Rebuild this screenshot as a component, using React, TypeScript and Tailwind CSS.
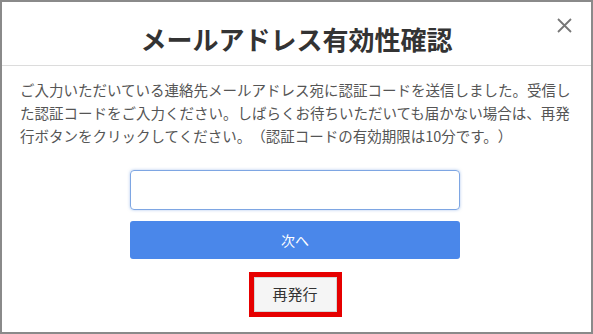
const jp = { fontFamily: '"Noto Sans CJK JP", "Noto Sans", sans-serif' };

export default function App() {
  return (
    <div
      className="w-[593px] h-[334px] border-2 border-[#8a8a8a] bg-white box-border"
      style={jp}
    >
      <div className="relative h-[64px] border-b border-[#dcdcdc] pt-[21px]">
        <h1 className="text-center text-[26px] leading-[32px] font-bold text-[#333]">
          メールアドレス有効性確認
        </h1>
        <button className="absolute right-[19px] top-[16px] w-[15px] h-[15px] text-[#777]">
          <svg viewBox="0 0 15 15" width="15" height="15">
            <path d="M1 1 L14 14 M14 1 L1 14" stroke="currentColor" strokeWidth="1.8" fill="none" />
          </svg>
        </button>
      </div>
      <div className="px-[18px] pt-[12px]">
        <p className="text-[14.5px] leading-[23px] text-[#555] [text-spacing-trim:space-all]">
          ご入力いただいている連絡先メールアドレス宛に認証コードを送信しました。受信した認証コードをご入力ください。しばらくお待ちいただいても届かない場合は、再発行ボタンをクリックしてください。（認証コードの有効期限は10分です。）
        </p>
        <div className="flex flex-col items-center pr-[3px]">
          <input
            type="text"
            className="mt-[23px] w-[330px] h-[40px] rounded-[4px] border border-[#7ea6e3] shadow-[0_0_3px_rgba(90,140,220,0.5)] outline-none px-3"
          />
          <button className="mt-[11px] w-[330px] h-[38px] rounded-[3px] bg-[#4a87ea] text-white text-[14px]">
            次へ
          </button>
          <div className="mt-[13px] border-[5px] border-[#e60000]">
            <button className="w-[83px] h-[35px] bg-[#f5f5f5] border border-[#d6d6d6] text-[15px] text-[#333]">
              再発行
            </button>
          </div>
        </div>
      </div>
    </div>
  );
}
